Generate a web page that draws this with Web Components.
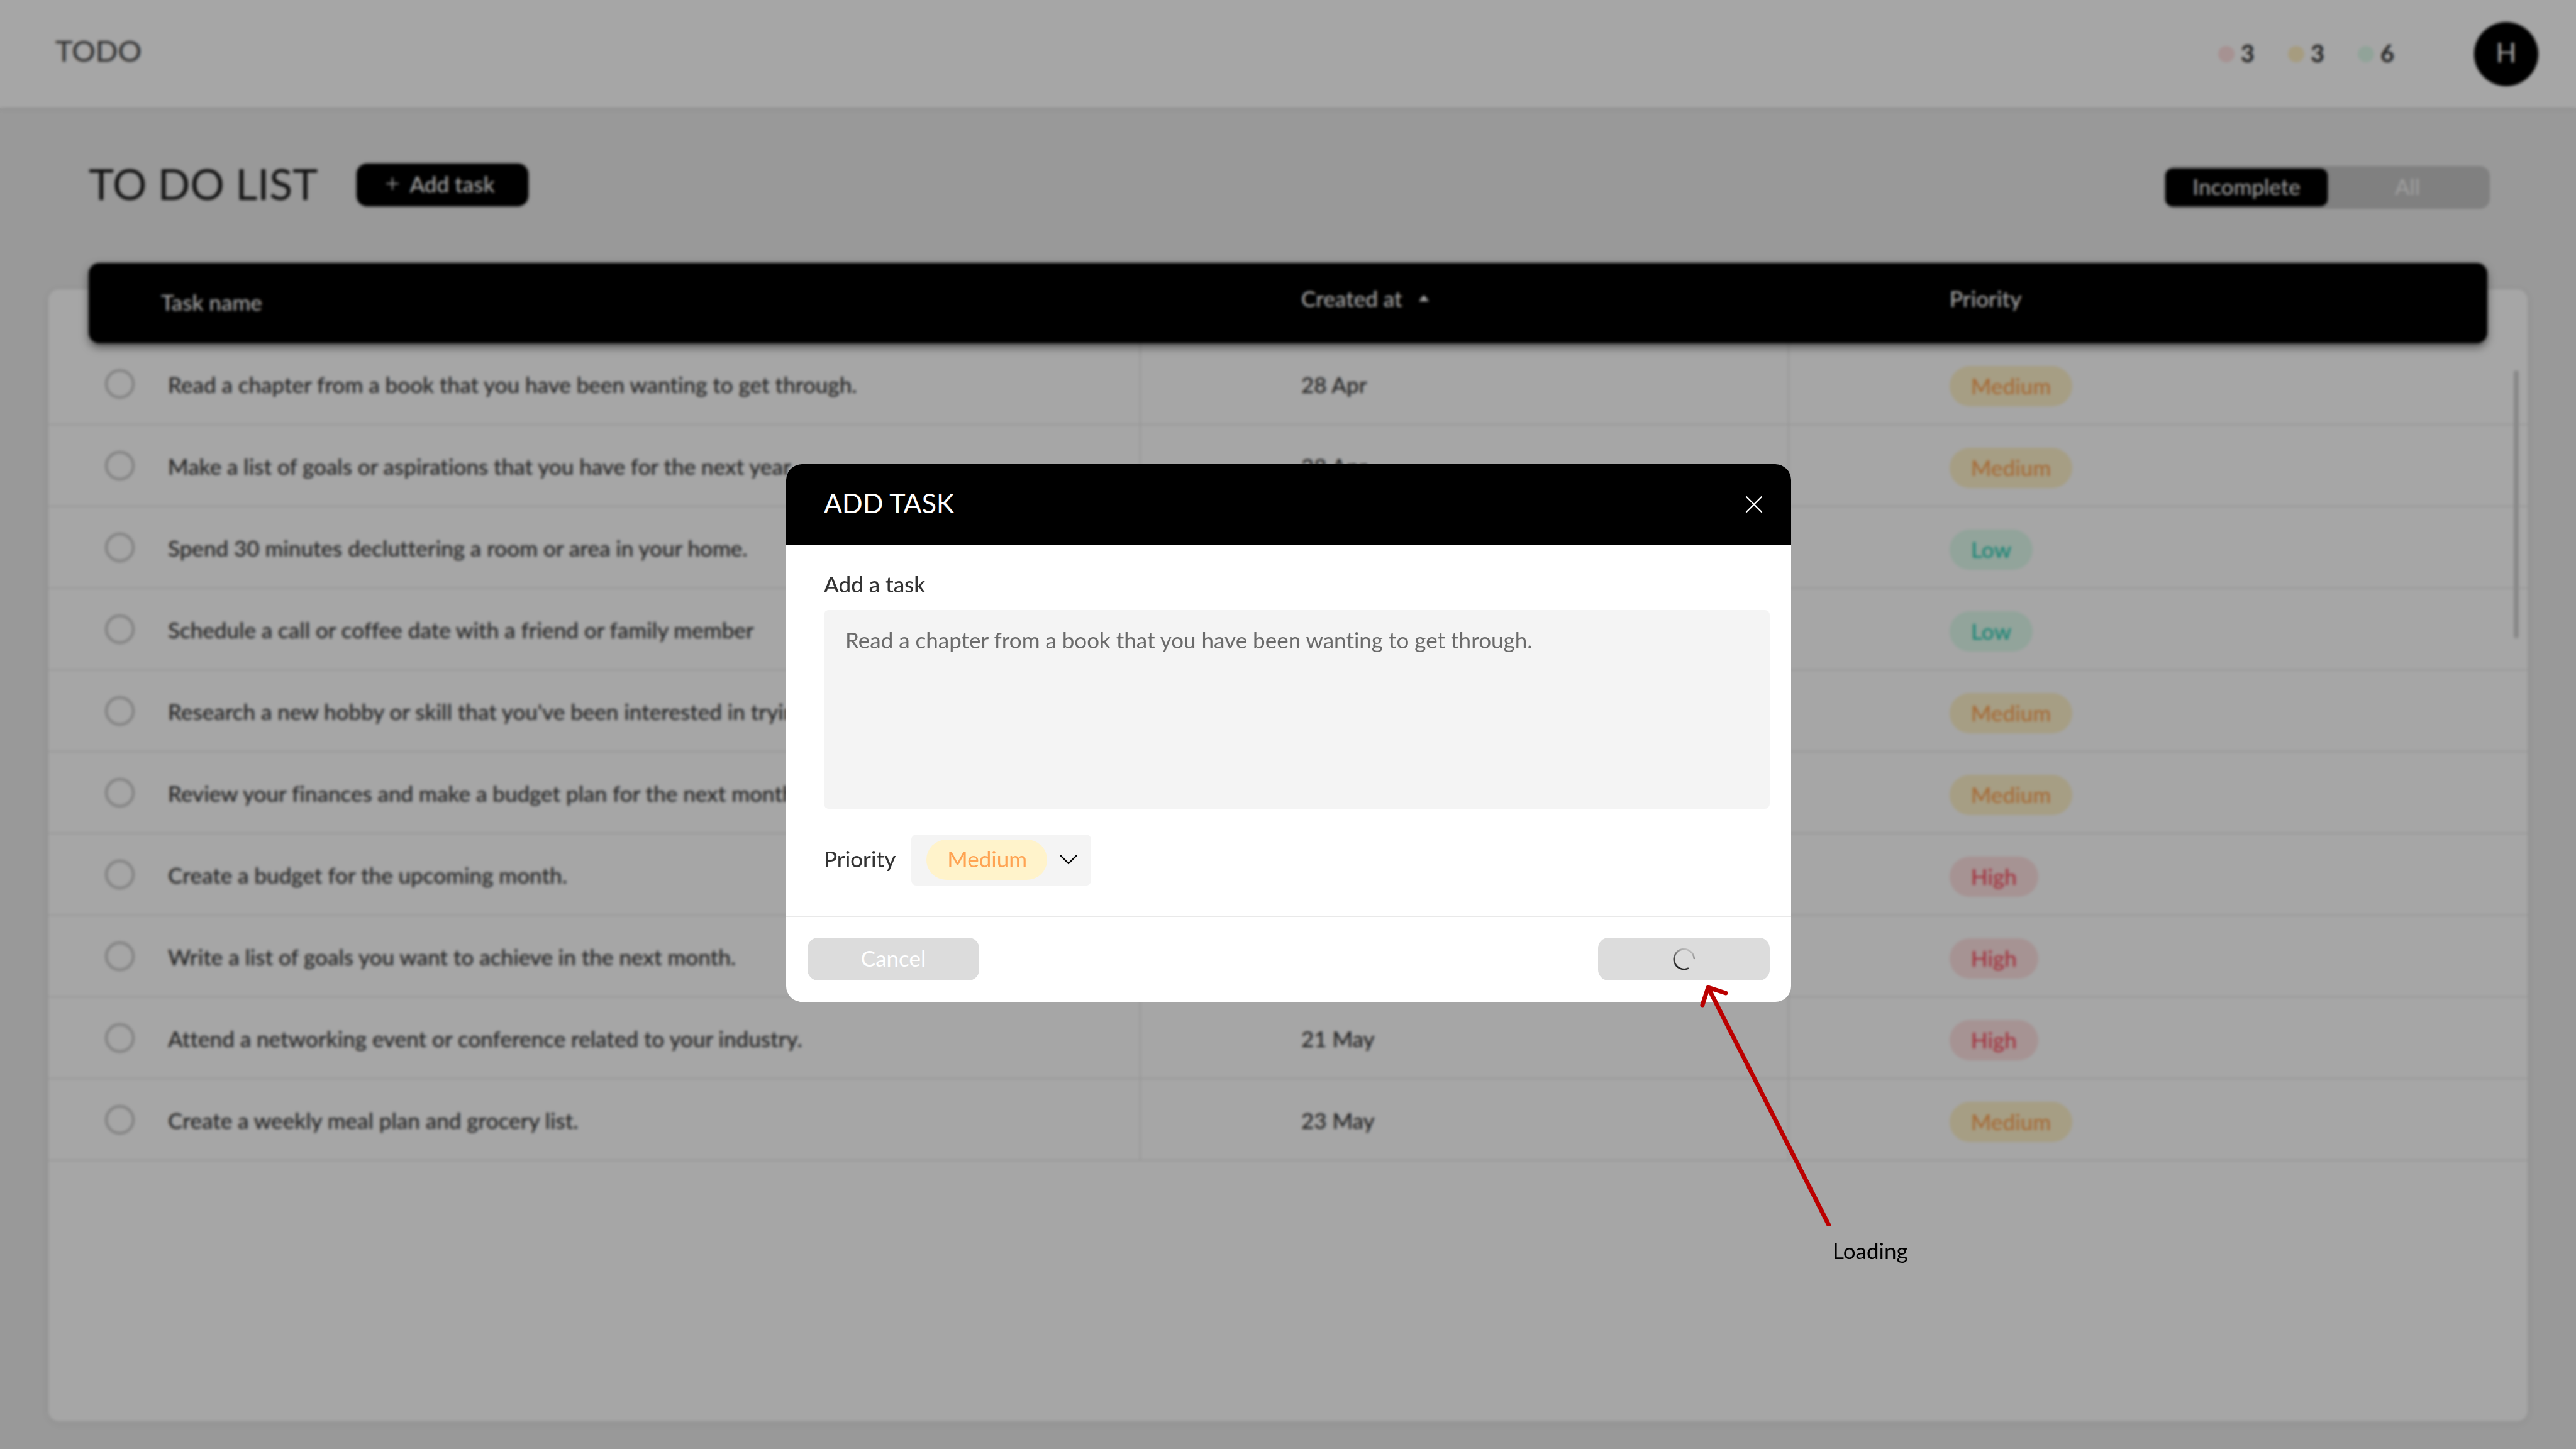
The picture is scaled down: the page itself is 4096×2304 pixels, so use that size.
<!DOCTYPE html>
<html lang="en">
<head>
<meta charset="utf-8">
<title>Todo</title>
<style>
  html, body { margin: 0; height: 100%; }
  body {
    --ink: #333;
    --soft: #f4f4f4;
    --line: #e8e8e8;
    --radius: 17px;
    font: 400 35px/48px Lato, "Open Sans", sans-serif;
    font-variant-ligatures: none;
    color: var(--ink);
    background: #ebebeb;
    overflow: hidden;
  }
</style>
</head>
<body>
<todo-app></todo-app>

<script>
const define = (name, html, setup) => {
  const template = document.createElement('template');
  template.innerHTML = html;
  customElements.define(name, class extends HTMLElement {
    constructor() {
      super();
      this.attachShadow({ mode: 'open' }).append(template.content.cloneNode(true));
    }
    connectedCallback() { if (setup) setup(this, this.shadowRoot); }
  });
};

define('priority-badge', `
<style>
  :host { display: inline-block; box-sizing: border-box; height: 64px; padding: 0 34px;
          border-radius: 32px; line-height: 62px; font-weight: 500; white-space: nowrap; }
  :host([level="medium"]) { background: #fff3cb; color: #ffa352; }
  :host([level="low"]) { background: #e0fcee; color: #25cdb4; }
  :host([level="high"]) { background: #ffe2e2; color: #fa4a5c; }
</style>
<slot></slot>`);

define('priority-count', `
<style>
  :host { display: flex; align-items: center; gap: 10px; font-weight: 700; font-size: 38px; line-height: 48px; }
  i { width: 26px; height: 26px; border-radius: 50%; background: #ffe0e0; }
  span { padding-bottom: 4px; }
  :host([level="medium"]) i { background: #fff0c4; }
  :host([level="low"]) i { background: #dffbec; }
</style>
<i></i><span><slot></slot></span>`);

define('app-header', `
<style>
  :host { display: flex; align-items: center; flex: none; box-sizing: border-box; height: 171px;
          padding: 0 60px 0 88px; background: #fff; box-shadow: 0 2px 8px rgba(0,0,0,.08); }
  .logo { flex: 1; font-size: 47px; line-height: 64px; padding-bottom: 12px; color: #444; }
  .counts { display: flex; gap: 53px; margin-right: 127px; }
  .avatar { display: grid; place-items: center; width: 102px; height: 102px; padding: 0 0 6px;
            box-sizing: border-box; border: 0; border-radius: 50%; background: #000; color: #fff;
            font: inherit; font-size: 43px; }
</style>
<div class="logo">TODO</div>
<div class="counts">
  <priority-count level="high">3</priority-count>
  <priority-count level="medium">3</priority-count>
  <priority-count level="low">6</priority-count>
</div>
<button class="avatar">H</button>`);

define('view-toggle', `
<style>
  :host { display: grid; grid-template-columns: 1fr 1fr; align-items: center; width: 516px; height: 68px; border-radius: 16px; background: #c5c5c5; }
  button { height: 68px; padding: 0 4px 4px 0; border: 0; background: none; font: inherit; font-variant-ligatures: none; color: #f4f4f4; }
  button[aria-pressed="true"] { height: 60px; padding: 0 0 4px; border-radius: 12px; background: #000; color: #fff;
                                 box-shadow: 0 0 4px rgba(0,0,0,.4); }
</style>
<button aria-pressed="true">Incomplete</button><button aria-pressed="false">All</button>`);

define('list-toolbar', `
<style>
  :host { display: flex; align-items: center; flex: none; box-sizing: border-box; height: 289px;
          padding: 0 137px 43px 141px; }
  h1 { margin: 0 62px 0 0; padding-bottom: 4px; font-size: 68px; line-height: 80px; font-weight: 400; color: #1c1c1c; }
  .add { display: flex; align-items: center; justify-content: center; gap: 16px; width: 273px; height: 68px;
         padding: 0 8px 4px 0; border: 0; border-radius: var(--radius); background: #000; color: #fff;
         font: inherit; font-weight: 500; box-shadow: 0 0 4px rgba(0,0,0,.4); }
  view-toggle { margin: 8px 0 0 auto; }
</style>
<h1>TO DO LIST</h1>
<button class="add">
  <svg width="22" height="22" viewBox="0 0 22 22" fill="none" stroke="#fff" stroke-width="2" stroke-linecap="round"><path d="M11 2v18M2 11h18"/></svg>
  Add task
</button>
<view-toggle></view-toggle>`);

const tasks = [
  ['Read a chapter from a book that you have been wanting to get through.', '28 Apr', 'Medium'],
  ['Make a list of goals or aspirations that you have for the next year.', '28 Apr', 'Medium'],
  ['Spend 30 minutes decluttering a room or area in your home.', '', 'Low'],
  ['Schedule a call or coffee date with a friend or family member', '', 'Low'],
  ["Research a new hobby or skill that you've been interested in trying", '', 'Medium'],
  ['Review your finances and make a budget plan for the next month.', '', 'Medium'],
  ['Create a budget for the upcoming month.', '', 'High'],
  ['Write a list of goals you want to achieve in the next month.', '', 'High'],
  ['Attend a networking event or conference related to your industry.', '21 May', 'High'],
  ['Create a weekly meal plan and grocery list.', '23 May', 'Medium'],
];

define('task-table', `
<style>
  :host { display: block; position: relative; isolation: isolate; flex: 1; margin: 0 77px 44px; border-radius: var(--radius);
          background: #fff; box-shadow: 0 2px 14px rgba(0,0,0,.07); }
  table { width: 100%; margin-top: -42px; table-layout: fixed; border-collapse: separate; border-spacing: 0; }
  .date { width: 1031px; }
  .priority { width: 1176px; }
  th, td { box-sizing: border-box; padding: 0 0 0 255px; text-align: left; font-weight: 500; }
  thead { position: relative; z-index: 1; color: #fff; }
  thead::before { content: ""; position: absolute; z-index: -1; inset: 0 64px; border-radius: var(--radius);
                  background: #000; box-shadow: 0 6px 14px rgba(0,0,0,.5); }
  th { height: 128px; padding: 0 0 16px 257px; }
  th:first-child { padding: 0 0 4px 179px; }
  th button { display: flex; align-items: center; gap: 26px; padding: 0; border: 0; background: none; color: inherit; font: inherit; }
  td { height: 130px; padding-top: 1px; border-bottom: 2px solid var(--line); }
  td + td { border-left: 2px solid var(--line); }
  td:first-child { padding-left: 90px; }
  td:last-child { padding-top: 8px; }
  .task { display: flex; align-items: center; gap: 53px; }
  input { appearance: none; box-sizing: border-box; width: 47px; height: 47px; margin: 0;
          border: 4px solid #c4c4c4; border-radius: 50%; }
  label { white-space: nowrap; }
  priority-badge { vertical-align: middle; }
  .scroll { position: absolute; z-index: 2; top: 129px; right: 14px; width: 8px; height: 426px; border-radius: 4px; background: #d2d2d2; }
</style>
<table>
  <colgroup><col><col class="date"><col class="priority"></colgroup>
  <thead><tr>
    <th>Task name</th>
    <th><button>Created at <svg width="16" height="10" viewBox="0 0 16 10"><path d="M8 0l8 10H0z" fill="#fff"/></svg></button></th>
    <th>Priority</th>
  </tr></thead>
  <tbody></tbody>
</table>
<div class="scroll"></div>`, (host, root) => {
  root.querySelector('tbody').innerHTML = tasks.map(([name, date, level], i) => `
    <tr><td><div class="task"><input type="checkbox" id="task-${i}"><label for="task-${i}">${name}</label></div></td>
    <td>${date}</td>
    <td><priority-badge level="${level.toLowerCase()}">${level}</priority-badge></td></tr>`).join('');
});

define('modal-dialog', `
<style>
  :host { position: fixed; z-index: 1; inset: 0; display: flex; align-items: center; justify-content: center;
          padding: 26px 0 0 2px; background: rgba(0,0,0,.35); backdrop-filter: blur(2px); }
  section { display: flex; flex-direction: column; width: 1598px; border-radius: 25px; background: #fff; overflow: hidden; }
  header { display: flex; align-items: center; justify-content: space-between; box-sizing: border-box; height: 128px;
           padding: 0 45px 0 60px; background: #000; color: #fff; }
  h2 { margin: 0; padding-bottom: 4px; font-size: 43px; line-height: 56px; font-weight: 400; }
  .close { display: flex; padding: 0; border: 0; background: none; }
  footer { display: flex; justify-content: space-between; padding: 33px 34px 34px; border-top: 2px solid #e9e9e9; }
</style>
<section role="dialog" aria-modal="true" aria-labelledby="title">
  <header>
    <h2 id="title"><slot name="title"></slot></h2>
    <button class="close" aria-label="Close"><svg width="28" height="28" viewBox="0 0 28 28" fill="none" stroke="#fff" stroke-width="2.2" stroke-linecap="round"><path d="M2 2l24 24M26 2L2 26"/></svg></button>
  </header>
  <slot></slot>
  <footer><slot name="actions"></slot></footer>
</section>`);

define('task-form', `
<style>
  :host { display: flex; flex-direction: column; padding: 38px 34px 48px 60px; }
  label { font-weight: 500; }
  textarea { box-sizing: border-box; width: 100%; height: 316px; margin: 18px 0 41px; padding: 23px 34px; border: 0;
             border-radius: 8px; resize: none; background: var(--soft); font: inherit; font-variant-ligatures: none; color: #6b6b6b; }
  .row { display: flex; align-items: center; gap: 25px; }
  .row label { padding-bottom: 4px; }
  .picker { display: flex; align-items: center; box-sizing: border-box; height: 81px; gap: 20px; padding: 0 22px 0 24px;
            border-radius: 8px; background: var(--soft); }
  select { appearance: none; width: 192px; height: 64px; padding: 0 33px 4px; border: 0; border-radius: 32px;
           background: #fff3cb; color: #ffa352; font: inherit; }
</style>
<label for="task">Add a task</label>
<textarea id="task">Read a chapter from a book that you have been wanting to get through.</textarea>
<div class="row">
  <label for="priority">Priority</label>
  <div class="picker">
    <select id="priority"><option>Medium</option></select>
    <svg width="28" height="18" viewBox="0 0 28 18" fill="none" stroke="#000" stroke-width="2.4" stroke-linecap="round" stroke-linejoin="round"><path d="M1.500 2.500l12.500 12.500L26.500 2.500"/></svg>
  </div>
</div>`);

define('muted-button', `
<style>
  :host { display: block; }
  button { display: grid; place-items: center; width: 273px; height: 68px; padding: 0; border: 0;
           border-radius: var(--radius); background: #dcdcdc; color: #fff; font: inherit; }
  :host([text]) button { padding-bottom: 4px; }
</style>
<button><slot></slot></button>`);

define('loading-spinner', `
<style>
  :host { display: block; width: 36px; height: 36px; }
  svg { display: block; }
</style>
<svg width="36" height="36" viewBox="0 0 36 36" fill="none" stroke-width="2.600" stroke-linecap="round">
  <defs><linearGradient id="fade" x1="12" y1="34" x2="26" y2="2" gradientUnits="userSpaceOnUse">
    <stop offset="0" stop-color="#222"/><stop offset=".35" stop-color="#4a4a4a"/><stop offset=".7" stop-color="#909090"/><stop offset="1" stop-color="#c8c8c8"/>
  </linearGradient></defs>
  <path d="M33.8 17A16 16 0 1 0 24.2 32.8" stroke="url(#fade)"/>
</svg>`);

define('call-out', `
<style>
  :host { position: fixed; z-index: 2; left: 2700px; top: 1560px; }
  svg { display: block; }
  p { margin: 14px 0 0 214px; color: #000; }
</style>
<svg width="216" height="390" viewBox="0 0 216 390" fill="none" stroke="#b00" stroke-width="7">
  <path d="M16 10L209 390"/>
  <path d="M7 38L16 10L44 19" stroke-linecap="round" stroke-linejoin="round"/>
</svg>
<p><slot></slot></p>`);

define('todo-app', `
<style>
  :host { display: flex; flex-direction: column; height: 100vh; }
</style>
<app-header></app-header>
<list-toolbar></list-toolbar>
<task-table></task-table>
<modal-dialog>
  <span slot="title">ADD TASK</span>
  <task-form></task-form>
  <muted-button slot="actions" text>Cancel</muted-button>
  <muted-button slot="actions" aria-label="Saving"><loading-spinner></loading-spinner></muted-button>
</modal-dialog>
<call-out>Loading</call-out>`);
</script>
</body>
</html>
